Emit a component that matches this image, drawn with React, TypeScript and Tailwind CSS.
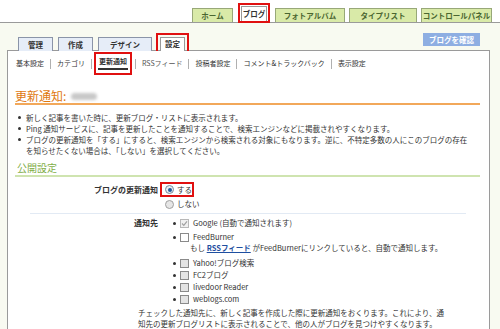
import React from "react";

const Sep = () => <span className="mx-[6px] inline-block h-[10px] w-px bg-[#b0b0b0]" />;

const Bullet = ({ className = "" }: { className?: string }) => (
  <span className={"block h-[3px] w-[3px] shrink-0 rounded-full bg-[#333] " + className} />
);

const Check = ({ checked, gray }: { checked?: boolean; gray?: boolean }) => (
  <span
    className={
      "relative flex h-[9px] w-[9px] shrink-0 items-center justify-center border " +
      (checked ? "border-[#b8b8b8] bg-[#f0f0f0]" : gray ? "border-[#8a8a8a] bg-[#e4e4e4]" : "border-[#8a8a8a] bg-white")
    }
  >
    {checked && (
      <svg width="7" height="7" viewBox="0 0 7 7">
        <path d="M1 3.5 L2.8 5.3 L6 1.3" stroke="#a0a0a0" strokeWidth="1.2" fill="none" />
      </svg>
    )}
  </span>
);

const Radio = ({ checked }: { checked?: boolean }) => (
  <span
    className={
      "flex h-[9px] w-[9px] shrink-0 items-center justify-center rounded-full border " +
      (checked ? "border-[#7a8a9a] bg-[#e8eef4]" : "border-[#a0a0a0] bg-[#e6e6e6]")
    }
  >
    {checked && <span className="h-[4px] w-[4px] rounded-full bg-[#1f5a9a]" />}
  </span>
);

export default function App() {
  return (
    <div className="relative h-[329px] w-[500px] overflow-hidden bg-[#f8faf1] text-[#333] font-['Noto_Sans_CJK_JP','Noto_Sans',sans-serif]">
      {/* top tabs */}
      <div className="flex h-[23px] items-end justify-end gap-[4px] border-b border-[#9a9a9a] bg-white pr-[8px] text-[7.5px] leading-none">
        <div className="flex h-[14px] w-[41px] items-center justify-center border border-b-0 border-[#98a878] bg-[#d9eaa8] font-bold text-[#4a6630]">
          ホーム
        </div>
        <div className="ml-[1px] mb-[-1px] flex h-[20px] w-[32px] items-end justify-center border-2 border-[#e01010] bg-white">
          <div className="flex h-[15px] w-[26px] items-center justify-center border border-b-0 border-[#999] bg-white font-bold text-[#333]">
            ブログ
          </div>
        </div>
        <div className="ml-[1px] flex h-[14px] w-[70px] items-center justify-center border border-b-0 border-[#98a878] bg-[#d9eaa8] font-bold text-[#4a6630]">
          フォトアルバム
        </div>
        <div className="flex h-[14px] w-[68px] items-center justify-center border border-b-0 border-[#98a878] bg-[#d9eaa8] font-bold text-[#4a6630]">
          タイプリスト
        </div>
        <div className="flex h-[14px] w-[71px] items-center justify-center border border-b-0 border-[#98a878] bg-[#d9eaa8] font-bold text-[#4a6630]">
          コントロールパネル
        </div>
      </div>

      {/* second tabs */}
      <div className="relative z-10 flex h-[27px] items-end pl-[18px] pr-[20px] text-[7.5px] leading-none">
        <div className="mb-[-1px] flex h-[14px] w-[35px] items-center justify-center border border-b-0 border-[#8a94a8] bg-[#e6edf8] font-bold">
          管理
        </div>
        <div className="ml-[5px] mb-[-1px] flex h-[14px] w-[35px] items-center justify-center border border-b-0 border-[#8a94a8] bg-[#e6edf8] font-bold">
          作成
        </div>
        <div className="ml-[5px] mb-[-1px] flex h-[14px] w-[54px] items-center justify-center border border-b-0 border-[#8a94a8] bg-[#e6edf8] font-bold">
          デザイン
        </div>
        <div className="ml-[4px] mb-[-1px] flex h-[18px] w-[33px] items-end justify-center border-2 border-b-0 border-[#e01010]">
          <div className="flex h-[14px] w-[25px] items-center justify-center border border-b-0 border-[#999] bg-white pb-[1px] font-bold">
            設定
          </div>
        </div>
        <div className="mb-[4px] ml-auto flex h-[13px] w-[57px] items-center justify-center bg-[#8eaee2] font-bold text-white">
          ブログを確認
        </div>
      </div>

      {/* panel */}
      <div className="ml-[7px] h-[300px] w-[483px] border border-b-0 border-[#9a9a9a] bg-white">
        {/* sub nav */}
        <div className="mt-[1px] flex h-[23px] items-center pl-[8px] text-[7px] leading-none">
          <span>基本設定</span>
          <Sep />
          <span>カテゴリ</span>
          <Sep />
          <span className="ml-[-4px] mr-[-3px] flex h-[23px] w-[38px] flex-col items-center justify-center border-2 border-[#e01010]">
            <span className="font-bold">更新通知</span>
            <span className="mt-[3px] h-[2px] w-[30px] bg-[#333]" />
          </span>
          <Sep />
          <span className="text-[#555]">RSSフィード</span>
          <Sep />
          <span>投稿者設定</span>
          <Sep />
          <span>コメント&amp;トラックバック</span>
          <Sep />
          <span>表示設定</span>
        </div>

        {/* heading */}
        <div className="mx-[7px] mr-[9px] mt-[14px] flex items-end border-b-2 border-[#f2a85a]">
          <span className="text-[12px] leading-[14px] text-[#e07810]">更新通知:</span>
          <span className="mb-[3px] ml-[5px] inline-block h-[7px] w-[26px] rounded-sm bg-[#c8c8c8] blur-[1.5px]" />
        </div>

        <div className="mt-[7px] pl-[10px] text-[7.5px] leading-[11px]">
          <div className="flex items-start gap-[5px]">
            <Bullet className="mt-[4px]" />
            <span>新しく記事を書いた時に、更新ブログ・リストに表示されます。</span>
          </div>
          <div className="flex items-start gap-[5px]">
            <Bullet className="mt-[4px]" />
            <span>Ping 通知サービスに、記事を更新したことを通知することで、検索エンジンなどに掲載されやすくなります。</span>
          </div>
          <div className="flex items-start gap-[5px]">
            <Bullet className="mt-[4px]" />
            <div>
              <div className="whitespace-nowrap">ブログの更新通知を「する」にすると、検索エンジンから検索される対象にもなります。逆に、不特定多数の人にこのブログの存在</div>
              <div className="whitespace-nowrap">を知らせたくない場合は、「しない」を選択してください。</div>
            </div>
          </div>
        </div>

        {/* section heading */}
        <div className="mx-[7px] mr-[9px] mt-[6px] border-b-2 border-[#cfe4b0] pb-[1px] pl-[2px] text-[10px] leading-[12px] text-[#7fae48]">
          公開設定
        </div>

        {/* row 1 */}
        <div className="mt-[5px] flex text-[7.5px] leading-[14px]">
          <div className="w-[150px] pt-[1px] text-right text-[8px] font-bold">ブログの更新通知</div>
          <div className="ml-[2px]">
            <div className="flex h-[15px] w-[34px] items-center gap-[3px] whitespace-nowrap border-2 border-[#e01010] pl-[3px]">
              <Radio checked />
              <span>する</span>
            </div>
            <div className="flex h-[14px] items-center gap-[3px] whitespace-nowrap pl-[5px]">
              <Radio />
              <span>しない</span>
            </div>
          </div>
        </div>

        <div className="ml-[22px] mt-[2px] h-px w-[436px] bg-[#e2eaf4]" />

        {/* row 2 */}
        <div className="mt-[3px] flex text-[7.5px] leading-[12px]">
          <div className="w-[150px] text-right text-[8px] font-bold">通知先</div>
          <div className="ml-[15px]">
            <div className="flex items-center gap-[4px]"><Bullet /><Check checked /><span>Google (自動で通知されます)</span></div>
            <div className="mt-[2px] flex items-center gap-[4px]"><Bullet /><Check /><span>FeedBurner</span></div>
            <div className="pl-[17px] leading-[10px]">もし <span className="font-bold text-[#1f4fa0] underline">RSSフィード</span> がFeedBurnerにリンクしていると、自動で通知します。</div>
            <div className="mt-[4px] flex items-center gap-[4px]"><Bullet /><Check gray /><span>Yahoo!ブログ検索</span></div>
            <div className="flex items-center gap-[4px]"><Bullet /><Check gray /><span>FC2ブログ</span></div>
            <div className="flex items-center gap-[4px]"><Bullet /><Check gray /><span>livedoor Reader</span></div>
            <div className="flex items-center gap-[4px]"><Bullet /><Check gray /><span>weblogs.com</span></div>
          </div>
        </div>
        <div className="mt-[2px] pl-[130px] text-[7.5px] leading-[11px]">
          <div>チェックした通知先に、新しく記事を作成した際に更新通知をおくります。これにより、通</div>
          <div>知先の更新ブログリストに表示されることで、他の人がブログを見つけやすくなります。</div>
        </div>
        <div className="ml-[22px] mt-[3px] h-px w-[436px] bg-[#e2eaf4]" />
      </div>
    </div>
  );
}
